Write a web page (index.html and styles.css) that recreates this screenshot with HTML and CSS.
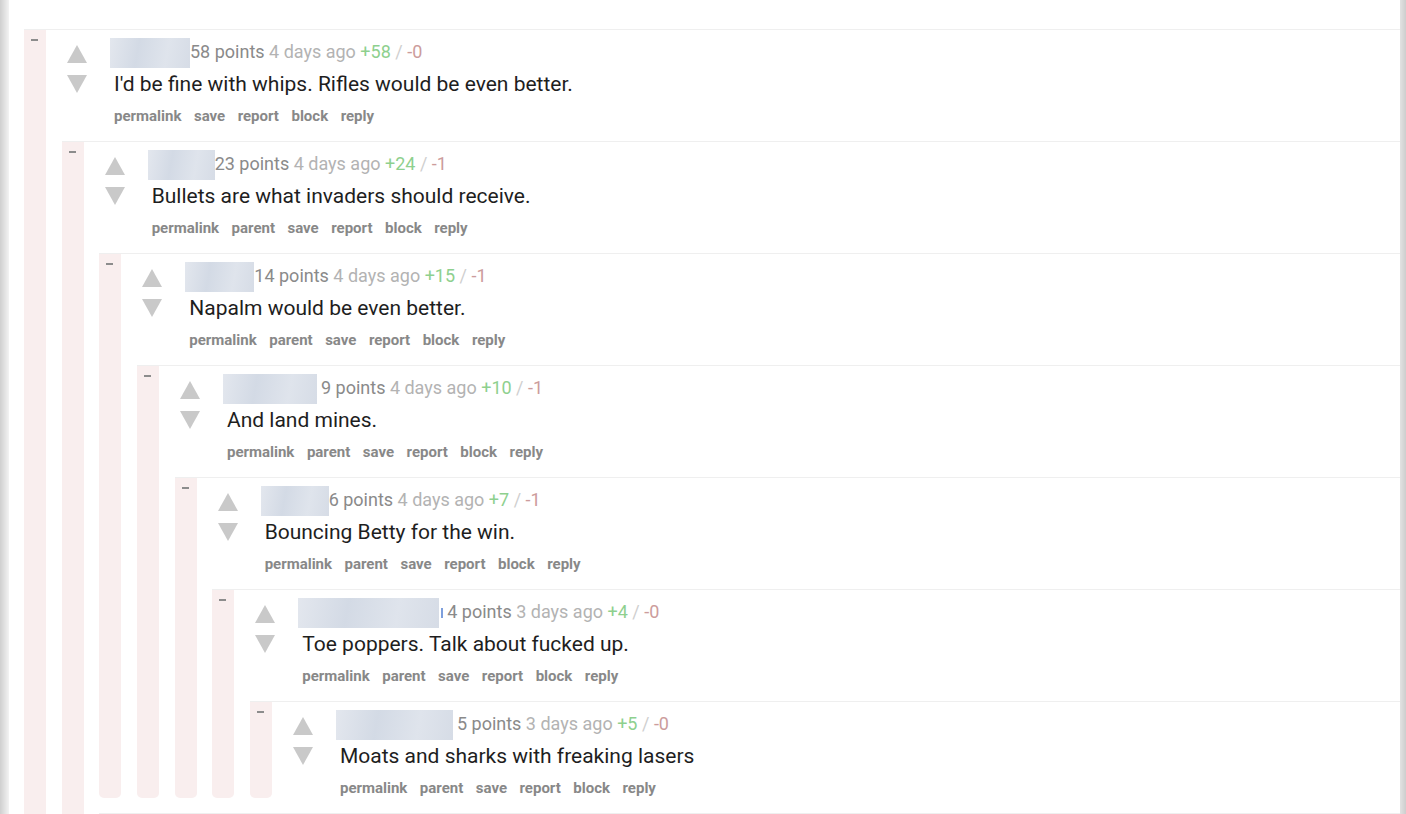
FILE: index.html
```html
<!DOCTYPE html>
<html lang="en">
<head>
  <meta charset="UTF-8">
  <title>Comments</title>
  <link rel="stylesheet" href="styles.css">
</head>
<body>
  <div class="page">
    <div class="thread">

      <!-- level 1 -->
      <div class="comment">
        <div class="stripe"><span class="minus"></span></div>
        <div class="main">
          <div class="entry">
            <div class="votes"><span class="up"></span><span class="down"></span></div>
            <div class="content">
              <div class="meta"><span class="user" style="width:80px"></span><span class="score">58 points</span> <span class="age">4 days ago</span> <span class="plus">+58</span> <span class="sep">/</span> <span class="minus-votes">-0</span></div>
              <div class="body">I'd be fine with whips. Rifles would be even better.</div>
              <div class="actions"><a>permalink</a><a>save</a><a>report</a><a>block</a><a>reply</a></div>
            </div>
          </div>
          <div class="children">

            <!-- level 2 -->
            <div class="comment">
              <div class="stripe"><span class="minus"></span></div>
              <div class="main">
                <div class="entry">
                  <div class="votes"><span class="up"></span><span class="down"></span></div>
                  <div class="content">
                    <div class="meta"><span class="user" style="width:67px"></span><span class="score">23 points</span> <span class="age">4 days ago</span> <span class="plus">+24</span> <span class="sep">/</span> <span class="minus-votes">-1</span></div>
                    <div class="body">Bullets are what invaders should receive.</div>
                    <div class="actions"><a>permalink</a><a>parent</a><a>save</a><a>report</a><a>block</a><a>reply</a></div>
                  </div>
                </div>
                <div class="children">

                  <!-- level 3 -->
                  <div class="comment">
                    <div class="stripe"><span class="minus"></span></div>
                    <div class="main">
                      <div class="entry">
                        <div class="votes"><span class="up"></span><span class="down"></span></div>
                        <div class="content">
                          <div class="meta"><span class="user" style="width:69px"></span><span class="score">14 points</span> <span class="age">4 days ago</span> <span class="plus">+15</span> <span class="sep">/</span> <span class="minus-votes">-1</span></div>
                          <div class="body">Napalm would be even better.</div>
                          <div class="actions"><a>permalink</a><a>parent</a><a>save</a><a>report</a><a>block</a><a>reply</a></div>
                        </div>
                      </div>
                      <div class="children">

                        <!-- level 4 -->
                        <div class="comment">
                          <div class="stripe"><span class="minus"></span></div>
                          <div class="main">
                            <div class="entry">
                              <div class="votes"><span class="up"></span><span class="down"></span></div>
                              <div class="content">
                                <div class="meta"><span class="user" style="width:94px;margin-right:4px"></span><span class="score">9 points</span> <span class="age">4 days ago</span> <span class="plus">+10</span> <span class="sep">/</span> <span class="minus-votes">-1</span></div>
                                <div class="body">And land mines.</div>
                                <div class="actions"><a>permalink</a><a>parent</a><a>save</a><a>report</a><a>block</a><a>reply</a></div>
                              </div>
                            </div>
                            <div class="children">

                              <!-- level 5 -->
                              <div class="comment">
                                <div class="stripe"><span class="minus"></span></div>
                                <div class="main">
                                  <div class="entry">
                                    <div class="votes"><span class="up"></span><span class="down"></span></div>
                                    <div class="content">
                                      <div class="meta"><span class="user" style="width:68px"></span><span class="score">6 points</span> <span class="age">4 days ago</span> <span class="plus">+7</span> <span class="sep">/</span> <span class="minus-votes">-1</span></div>
                                      <div class="body">Bouncing Betty for the win.</div>
                                      <div class="actions"><a>permalink</a><a>parent</a><a>save</a><a>report</a><a>block</a><a>reply</a></div>
                                    </div>
                                  </div>
                                  <div class="children">

                                    <!-- level 6 -->
                                    <div class="comment">
                                      <div class="stripe"><span class="minus"></span></div>
                                      <div class="main">
                                        <div class="entry">
                                          <div class="votes"><span class="up"></span><span class="down"></span></div>
                                          <div class="content">
                                            <div class="meta"><span class="user" style="width:141px"></span><span class="user-tail"></span><span class="score">4 points</span> <span class="age">3 days ago</span> <span class="plus">+4</span> <span class="sep">/</span> <span class="minus-votes">-0</span></div>
                                            <div class="body">Toe poppers. Talk about fucked up.</div>
                                            <div class="actions"><a>permalink</a><a>parent</a><a>save</a><a>report</a><a>block</a><a>reply</a></div>
                                          </div>
                                        </div>
                                        <div class="children">

                                          <!-- level 7 -->
                                          <div class="comment">
                                            <div class="stripe"><span class="minus"></span></div>
                                            <div class="main">
                                              <div class="entry">
                                                <div class="votes"><span class="up"></span><span class="down"></span></div>
                                                <div class="content">
                                                  <div class="meta"><span class="user" style="width:117px;margin-right:4px"></span><span class="score">5 points</span> <span class="age">3 days ago</span> <span class="plus">+5</span> <span class="sep">/</span> <span class="minus-votes">-0</span></div>
                                                  <div class="body">Moats and sharks with freaking lasers</div>
                                                  <div class="actions"><a>permalink</a><a>parent</a><a>save</a><a>report</a><a>block</a><a>reply</a></div>
                                                </div>
                                              </div>
                                            </div>
                                          </div>

                                        </div>
                                      </div>
                                    </div>

                                  </div>
                                </div>
                              </div>

                            </div>
                          </div>
                        </div>

                      </div>
                    </div>
                  </div>

                  <!-- next level 3 sibling, below the fold -->
                  <div class="comment">
                    <div class="stripe"><span class="minus"></span></div>
                    <div class="main">
                      <div class="entry">
                        <div class="votes"><span class="up"></span><span class="down"></span></div>
                      </div>
                    </div>
                  </div>

                </div>
              </div>
            </div>

          </div>
        </div>
      </div>

    </div>
  </div>
</body>
</html>
```

FILE: styles.css
```css
/* page frame */
html, body {
  height: 100%;
  overflow: hidden;
}
body {
  margin: 0;
  font-family: Roboto, "Noto Sans", Arial, sans-serif;
  background: linear-gradient(to right, #cfcfcf 0, #f3f3f3 9px, #fff 9px, #fff 1400px, #e2e2e2 1400px, #cdcdcd 1406px);
}
.page {
  margin: 0 6px 0 9px;
  min-height: 100%;
  background-color: #fff;
  padding-top: 29px;
  box-sizing: border-box;
}
.thread {
  padding-left: 15px;
}

/* comment blocks */
.comment {
  display: flex;
  border-top: 1px solid #efefef;
}
.children > .comment {
  margin-top: 15px;
}
.stripe {
  width: 22px;
  flex-shrink: 0;
  background-color: #f9eeee;
  border-radius: 0 0 5px 5px;
}
.stripe .minus {
  display: block;
  width: 7px;
  height: 2px;
  margin: 9px 0 0 7px;
  background-color: #8c8c8c;
}
.main {
  flex: 1;
  min-width: 0;
}
.children {
  padding-left: 15.67px;
}

/* entry */
.entry {
  display: flex;
  padding-left: 21px;
}
.votes {
  width: 20px;
  flex-shrink: 0;
  padding-top: 15px;
}
.votes span {
  display: block;
  width: 0;
  height: 0;
  border-left: 10px solid transparent;
  border-right: 10px solid transparent;
}
.votes .up {
  border-bottom: 18px solid #c9c9c9;
}
.votes .down {
  margin-top: 12px;
  border-top: 18px solid #c9c9c9;
}
.content {
  margin-left: 27px;
}

.meta {
  height: 24px;
  line-height: 24px;
  margin-top: 10px;
  font-size: 18px;
  white-space: nowrap;
  color: #8a8a8a;
}
.user {
  display: inline-block;
  vertical-align: middle;
  height: 30px;
  margin: -3px 0 -3px -4px;
  background: linear-gradient(100deg, #e3e7ee 0%, #d3dae5 35%, #dfe4ec 70%, #d6dce6 100%);
}
.user-tail {
  display: inline-block;
  vertical-align: middle;
  width: 3px;
  height: 10px;
  margin: 0 4px 0 1px;
  border-right: 2px solid #7e9fdc;
  box-sizing: border-box;
}
.age {
  color: #b3b3b3;
}
.plus {
  color: #8ed08e;
}
.sep {
  color: #cfcfcf;
}
.minus-votes {
  color: #cc9c9c;
}

.body {
  margin-top: 5px;
  font-size: 21px;
  line-height: 30px;
  color: #1e1e1e;
}
.actions {
  margin-top: 7px;
  font-size: 15px;
  line-height: 20px;
  font-weight: bold;
  color: #888;
}
.actions a {
  margin-right: 12.5px;
}
```
